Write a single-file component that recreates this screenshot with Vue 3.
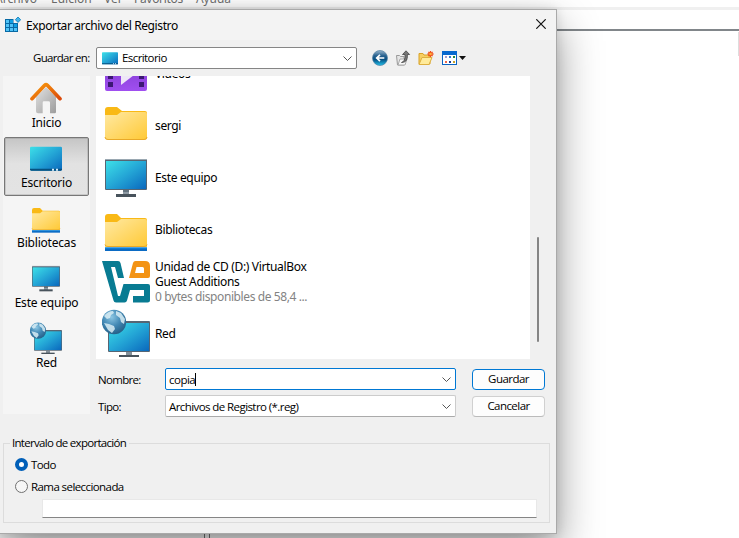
<script setup>
const menu = [
  { label: 'Archivo', cls: 'm1' },
  { label: 'Edición', cls: 'm2' },
  { label: 'Ver', cls: 'm3' },
  { label: 'Favoritos', cls: 'm4' },
  { label: 'Ayuda', cls: 'm5' },
]
const places = [
  { label: 'Inicio', icon: 'home' },
  { label: 'Escritorio', icon: 'desktop', active: true },
  { label: 'Bibliotecas', icon: 'library' },
  { label: 'Este equipo', icon: 'pc' },
  { label: 'Red', icon: 'net' },
]
const files = [
  { lines: ['Vídeos'], icon: 'video' },
  { lines: ['sergi'], icon: 'folder' },
  { lines: ['Este equipo'], icon: 'pc' },
  { lines: ['Bibliotecas'], icon: 'library' },
  { lines: ['Unidad de CD (D:) VirtualBox', 'Guest Additions'], note: '0 bytes disponibles de 58,4 ...', icon: 'vbox' },
  { lines: ['Red'], icon: 'net' },
]
</script>

<template>
  <div class="screen">
    <svg class="defs" width="0" height="0" aria-hidden="true">
      <defs>
        <linearGradient id="gBlue" x1="0" y1="0" x2="1" y2="1">
          <stop offset="0" stop-color="#3de0e8" /><stop offset=".5" stop-color="#24a6d6" /><stop offset="1" stop-color="#0a68bd" />
        </linearGradient>
        <linearGradient id="gFolder" x1="0" y1="0" x2="1" y2="1">
          <stop offset="0" stop-color="#ffe9a3" /><stop offset="1" stop-color="#ffc935" />
        </linearGradient>
        <linearGradient id="gRoof" x1="0" y1="0" x2="1" y2="1">
          <stop offset="0" stop-color="#f99b0c" /><stop offset="1" stop-color="#db4a0b" />
        </linearGradient>
        <linearGradient id="gWall" x1="0" y1="0" x2="1" y2="1">
          <stop offset="0" stop-color="#e2e2e2" /><stop offset="1" stop-color="#9c9c9c" />
        </linearGradient>
        <radialGradient id="gGlobe" cx=".4" cy=".3" r=".75">
          <stop offset="0" stop-color="#8cc6e3" /><stop offset=".5" stop-color="#4389b5" /><stop offset="1" stop-color="#235c84" />
        </radialGradient>
        <linearGradient id="gBack" x1="0" y1="0" x2="0" y2="1">
          <stop offset="0" stop-color="#9ab6cc" /><stop offset=".35" stop-color="#27618f" /><stop offset=".6" stop-color="#075083" /><stop offset="1" stop-color="#22c3ee" />
        </linearGradient>
        <linearGradient id="gVideo" x1="0" y1="0" x2="0" y2="1">
          <stop offset="0" stop-color="#7a37c8" /><stop offset="1" stop-color="#a04ff0" />
        </linearGradient>
        <symbol id="home" viewBox="0 0 48 48">
          <path d="M9 22 24 8l15 14v23q0 2-2 2h-7V31q0-2-2-2h-7q-2 0-2 2v16h-7q-3 0-3-3z" fill="url(#gWall)" />
          <path d="M3 25 22 5q2-2 4 0l19 20" fill="none" stroke="url(#gRoof)" stroke-width="5.500" stroke-linecap="round" stroke-linejoin="round" />
        </symbol>
        <symbol id="desktop" viewBox="0 0 48 48">
          <rect y="7" width="48" height="36" rx="2" fill="url(#gBlue)" />
          <path d="M0 40h48v1q0 2-2 2H2q-2 0-2-2z" fill="#07517f" />
          <path d="M33 40h3v3h-3zM39 40h3v3h-3z" fill="#d6f0ff" />
        </symbol>
        <symbol id="folder" viewBox="0 0 48 48">
          <path d="M3 9q0-3 3-3h9l5 4h23q2 0 2 2v10H3z" fill="#f9b916" />
          <path d="M3 14h12l4-3h24q2 0 2 2v23q0 3-3 3H6q-3 0-3-3z" fill="url(#gFolder)" />
          <path d="M3 36q0 2.500 3 2.500h36q3 0 3-2.500" fill="none" stroke="#e9a928" />
        </symbol>
        <symbol id="library" viewBox="0 0 48 48">
          <path d="M3 12q0-3 3-3h9l4 4h24q2 0 2 2v9H3z" fill="#f9b916" />
          <path d="M3 17h12l4-3h24q2 0 2 2v26H3z" fill="url(#gFolder)" />
          <path d="M3 39.500q0 2 3 2h36q3 0 3-2" fill="none" stroke="#e9a928" />
          <rect x="3" y="42.500" width="42" height="3.500" fill="#0b6bc4" />
          <path d="M3 43h42" stroke="#1590e4" />
        </symbol>
        <symbol id="pc" viewBox="0 0 48 48">
          <path d="M21 36h6v6h-6z" fill="#8e9aa4" /><path d="M21 37h6v2h-6z" fill="#66747f" />
          <rect x="3" y="6" width="42" height="31" rx="1" fill="#566573" />
          <path d="M3 6.500h42" stroke="#9aa8b2" />
          <rect x="4" y="8" width="40" height="28" fill="url(#gBlue)" />
          <rect x="14" y="41" width="20" height="3" fill="#48535c" />
        </symbol>
        <symbol id="net" viewBox="0 0 48 48">
          <path d="M24 43h6v4h-6z" fill="#84909a" />
          <rect x="6" y="12" width="42" height="31" rx="1" fill="#566573" />
          <rect x="7" y="14" width="40" height="28" fill="url(#gBlue)" />
          <rect x="17" y="46" width="20" height="2" fill="#48535c" />
          <circle cx="12" cy="13" r="12.200" fill="url(#gGlobe)" />
          <path d="M2 7q4-5 9-5l1 2-3 2-1 3-3 1zM2 14l5 1 5 2 1 3-3 4-4-3zM14 2l5 2 4 6-1 5-3-2-1-4-4-3z" fill="#d9edf5" fill-opacity=".85" />
        </symbol>
        <symbol id="vbox" viewBox="0 0 48 48">
          <path d="M0 4h16q2 0 2.500 2L22 21h-6l-3-11H9l7 29h2l3.500-12H46q2 0 2 2v14q0 2.500-2.500 2.500H31V39h11v-6H28l-3 10.500q-.5 2-2.500 2H14q-2 0-2.500-2z" fill="#087b92" />
          <path d="M31 6q.6-2 2.500-2H43q5 0 5 5v10q0 2-2 2H27zM34.500 10 33 16h9v-4.500q0-1.500-1.500-1.500z" fill="#f39314" fill-rule="evenodd" />
        </symbol>
        <symbol id="video" viewBox="0 0 48 48">
          <rect x="3" y="6" width="42" height="36" rx="2" fill="url(#gVideo)" />
          <path d="M6 17h5v5H6zM6 25h5v5H6zM6 33h5v5H6zM37 17h5v5h-5zM37 25h5v5h-5zM37 33h5v5h-5z" fill="#3c1874" />
          <path d="M19 13v23l15-11.500z" fill="#eee6f7" />
        </symbol>
      </defs>
    </svg>

    <div class="back">
      <div class="menubar">
        <span v-for="m in menu" :key="m.label" :class="m.cls">{{ m.label }}</span>
      </div>
      <div class="strip"></div>
      <div class="header"></div>
      <div class="panes">
        <div class="tree"></div>
        <div class="values"><div class="edge"></div></div>
      </div>
    </div>

    <div class="dialog">
      <div class="title">
        <svg width="16" height="16" viewBox="0 0 16 16" class="reg">
          <rect x="0" y="2" width="13" height="13" fill="#086aa5" />
          <path d="M1 3h3v3H1zM1 7h3v3H1zM1 11h3v3H1zM5 7h3v3H5zM5 11h3v3H5zM9 11h3v3H9z" fill="#4fc3f7" />
          <path d="M5 3h3v3H5zM9 7h3v3H9z" fill="#0f9fe4" />
          <path d="M8.500 0H16v6H8.500z" fill="#f3f3f3" />
          <path d="m13 0 2.700 2.700L13 5.400l-2.700-2.700z" fill="#42b4ea" stroke="#087cb9" stroke-width=".8" />
        </svg>
        <span class="name">Exportar archivo del Registro</span>
        <svg class="close" width="10" height="10" viewBox="0 0 10 10"><path d="m.3.300 9.400 9.400M9.700.300.300 9.700" stroke="#111" stroke-width="1.200" /></svg>
      </div>

      <div class="lookin ui">
        <span class="lab">Guardar en:</span>
        <div class="combo">
          <svg width="16" height="16"><use href="#desktop" /></svg>
          <span>Escritorio</span>
          <svg class="chev" width="9" height="5" viewBox="0 0 9 5"><path d="m.5.500 4 4 4-4" /></svg>
        </div>
        <div class="tools">
          <svg width="16" height="16" viewBox="0 0 16 16">
            <circle cx="8" cy="8" r="7.500" fill="url(#gBack)" stroke="#507fa2" stroke-width=".7" />
            <path d="M12.300 8H5M8 4.800 4.700 8 8 11.200" fill="none" stroke="#fff" stroke-width="1.700" />
          </svg>
          <svg width="16" height="16" viewBox="0 0 16 16">
            <path d="M1.500 5.500h3l1 1H9v8.500H2.500z" fill="#e5e5e5" stroke="#999" />
            <path d="m3 15 2-6h7l-2 6z" fill="#f7f7f7" stroke="#aaa" />
            <path d="M6.500 12.500q4-1 3.500-8H7.500L11 .800l3.600 3.700h-2.200q.6 8-5.900 8z" fill="#777" stroke="#444" stroke-width=".8" />
          </svg>
          <svg width="16" height="16" viewBox="0 0 16 16">
            <path d="M1 3.500h4l1 1.500h6v9H1z" fill="#f7cf62" stroke="#d9a227" />
            <path d="m1 14.500 3-7h10l-3 7z" fill="#ffeb9b" stroke="#deb040" />
            <path d="M12.500 1v6M9.500 4h6M10.400 1.900l4.200 4.200M14.600 1.900l-4.200 4.200" stroke="#f04b17" stroke-width="1.300" />
            <circle cx="12.500" cy="4" r="1.300" fill="#ffb03a" />
          </svg>
          <svg width="25" height="16" viewBox="0 0 25 16">
            <rect x="1.500" y="1.500" width="14" height="13" fill="#fff" stroke="#0a63c2" />
            <path d="M1 1h15v4H1z" fill="#0869cf" />
            <path d="M4 6h2v2H4z" fill="#a99bcb" /><path d="M8 6h2v2H8z" fill="#3378cd" /><path d="M12 6h2v2h-2z" fill="#23863d" />
            <path d="M4 11h2v2H4z" fill="#ef694b" /><path d="M8 11h2v2H8z" fill="#153b9c" /><path d="M12 11h2v2h-2z" fill="#c9a226" />
            <path d="M18 6h7l-3.500 4z" fill="#111" />
          </svg>
        </div>
      </div>

      <div class="main">
        <div class="places">
          <div v-for="p in places" :key="p.label" class="place" :class="{ active: p.active }">
            <svg width="32" height="32"><use :href="'#' + p.icon" /></svg>
            <span>{{ p.label }}</span>
          </div>
        </div>
        <div class="right">
          <div class="listrow">
            <div class="list">
              <div v-for="f in files" :key="f.icon + f.lines[0]" class="file">
                <svg width="48" height="48"><use :href="'#' + f.icon" /></svg>
                <div class="text">
                  <div v-for="l in f.lines" :key="l">{{ l }}</div>
                  <div v-if="f.note" class="note">{{ f.note }}</div>
                </div>
              </div>
            </div>
            <div class="thumb"></div>
          </div>
          <div class="form ui">
            <span class="lab">Nombre:</span>
            <div class="field focus"><span class="value">copia</span><i class="caret"></i>
              <svg class="chev" width="9" height="5" viewBox="0 0 9 5"><path d="m.5.500 4 4 4-4" /></svg>
            </div>
            <button class="btn primary">Guardar</button>
            <span class="lab">Tipo:</span>
            <div class="field"><span>Archivos de Registro (*.reg)</span>
              <svg class="chev" width="9" height="5" viewBox="0 0 9 5"><path d="m.5.500 4 4 4-4" /></svg>
            </div>
            <button class="btn">Cancelar</button>
          </div>
        </div>
      </div>

      <fieldset class="range ui">
        <legend>Intervalo de exportación</legend>
        <div class="radio"><i class="dot on"></i><span>Todo</span></div>
        <div class="radio"><i class="dot"></i><span>Rama seleccionada</span></div>
        <div class="path"></div>
      </fieldset>
    </div>
  </div>
</template>

<style>
body { margin: 0; overflow: hidden; }
</style>

<style scoped>
* { box-sizing: border-box; }
.screen { position: relative; width: 739px; height: 538px; overflow: hidden; font-family: "Noto Sans", "Open Sans", sans-serif; font-size: 12px; color: #000; background: #fff; }
.defs { position: absolute; }
svg { display: block; flex: none; }
.back { height: 538px; display: flex; flex-direction: column; }
.menubar { height: 7px; display: flex; color: #707070; line-height: 16px; align-items: flex-end; margin-left: -5px; white-space: nowrap; }
.menubar span { flex: none; height: 16px; }
.m1 { width: 56px; } .m2 { width: 53px; } .m3 { width: 30px; } .m4 { width: 62px; letter-spacing: -.3px; } .m5 { width: 50px; letter-spacing: -.1px; }
.strip { height: 3px; background: #f0f0f0; }
.header { height: 21px; border-bottom: 2px solid #81868a; }
.panes { flex: 1; display: flex; }
.tree { width: 205px; border-right: 1px solid #777; }
.values { flex: 1; margin-left: 4px; border-left: 1px solid #777; }
.edge { width: 1px; height: 24px; margin: 1px 0 0 auto; background: #ddd; }
.dialog { position: absolute; left: -1px; top: 9px; width: 558px; height: 525px; border: 1px solid #a9a9a9; background: #f0f0f0; box-shadow: 0 0 10px rgba(0, 0, 0, .12), 0 18px 40px rgba(0, 0, 0, .42); display: flex; flex-direction: column; }
.title { height: 30px; background: #f3f3f3; display: flex; align-items: center; padding: 0 10px 0 5px; }
.name { margin-left: 5px; letter-spacing: -.39px; }
.close { margin-left: auto; margin-top: -2px; }
.ui { font-family: "Open Sans", "Noto Sans", sans-serif; font-size: 11.500px; letter-spacing: -.58px; }
.lookin { height: 36px; display: flex; align-items: center; }
.lookin .lab { width: 96px; padding-left: 33px; letter-spacing: -.7px; margin-top: -1px; }
.combo { width: 261px; height: 22px; border: 1px solid #858585; border-radius: 2px; background: #fff; display: flex; align-items: center; padding: 0 4px 0 5px; gap: 4px; }
.combo span { margin-top: -1px; }
.chev { margin-left: auto; }
.chev path { fill: none; stroke: #555; stroke-width: 1; }
.tools { display: flex; margin-left: 15px; gap: 7px; }
.main { display: flex; height: 339px; }
.places { width: 87px; margin-left: 3px; height: 338px; background: #f5f5f5; padding: 1px 1px 0 1px; }
.place { height: 59px; margin-bottom: 1px; border: 1px solid transparent; display: flex; flex-direction: column; align-items: center; padding-top: 4px; line-height: 17px; letter-spacing: -.2px; }
.place svg { margin-left: -1px; }
.place.active { border: 1px solid #777; border-radius: 2px; background: linear-gradient(#c5c5c5, #e2e2e2 45%, #e3e3e3); box-shadow: inset 0 0 0 1px rgba(120, 120, 120, .25); }
.right { margin-left: 6px; }
.listrow { display: flex; height: 283px; }
.list { width: 434px; height: 283px; overflow: hidden; background: #fff; }
.file { height: 52px; display: flex; align-items: center; padding-left: 6px; }
.file:first-child { margin-top: -29px; }
.text { margin-left: 5px; line-height: 15px; letter-spacing: -.34px; white-space: nowrap; }
.note { color: #838383; letter-spacing: -.4px; }
.thumb { width: 2px; height: 105px; margin: 161px 0 0 7px; background: #858585; border-radius: 1px; }
.form { display: grid; grid-template-columns: 69px 291px 73px; grid-template-rows: 22px 22px; row-gap: 5px; padding-top: 9px; align-items: center; }
.form .lab { padding-left: 2px; letter-spacing: -.68px; margin-top: 1px; }
.field { height: 22px; background: #fff; border: 1px solid #ccc; border-bottom-color: #aaa; border-radius: 2px; display: flex; align-items: center; padding: 0 4px 0 3px; }
.focus { border-color: #0078d4; }
.value { letter-spacing: -.5px; }
.caret { width: 1px; height: 13px; background: #000; }
.btn { margin: 0 0 0 16px; width: 73px; height: 21px; padding: 0; border: 1px solid #d0d0d0; border-bottom-color: #bbb; border-radius: 4px; background: #fdfdfd; font: inherit; letter-spacing: -.55px; color: #000; line-height: 18px; }
.primary { border-color: #0078d4; }
.range { margin: 20px 7px 0 3px; padding: 1px 11px 0; width: 547px; height: 88px; border: 1px solid #dcdcdc; }
.range legend { margin-left: -5px; padding: 0 3px 0 2px; height: 16px; line-height: 16px; letter-spacing: -.7px; }
.radio { height: 22px; display: flex; align-items: center; gap: 3px; position: relative; top: 1px; }
.dot { width: 13px; height: 13px; border: 1px solid #707070; border-radius: 50%; background: #f6f6f6; }
.dot.on { border: 4px solid #005fb8; background: #fff; }
.path { width: 495px; height: 19px; margin: 3px 0 0 27px; background: #fff; border: 1px solid #e8e8e8; border-bottom-color: #858585; }
</style>
